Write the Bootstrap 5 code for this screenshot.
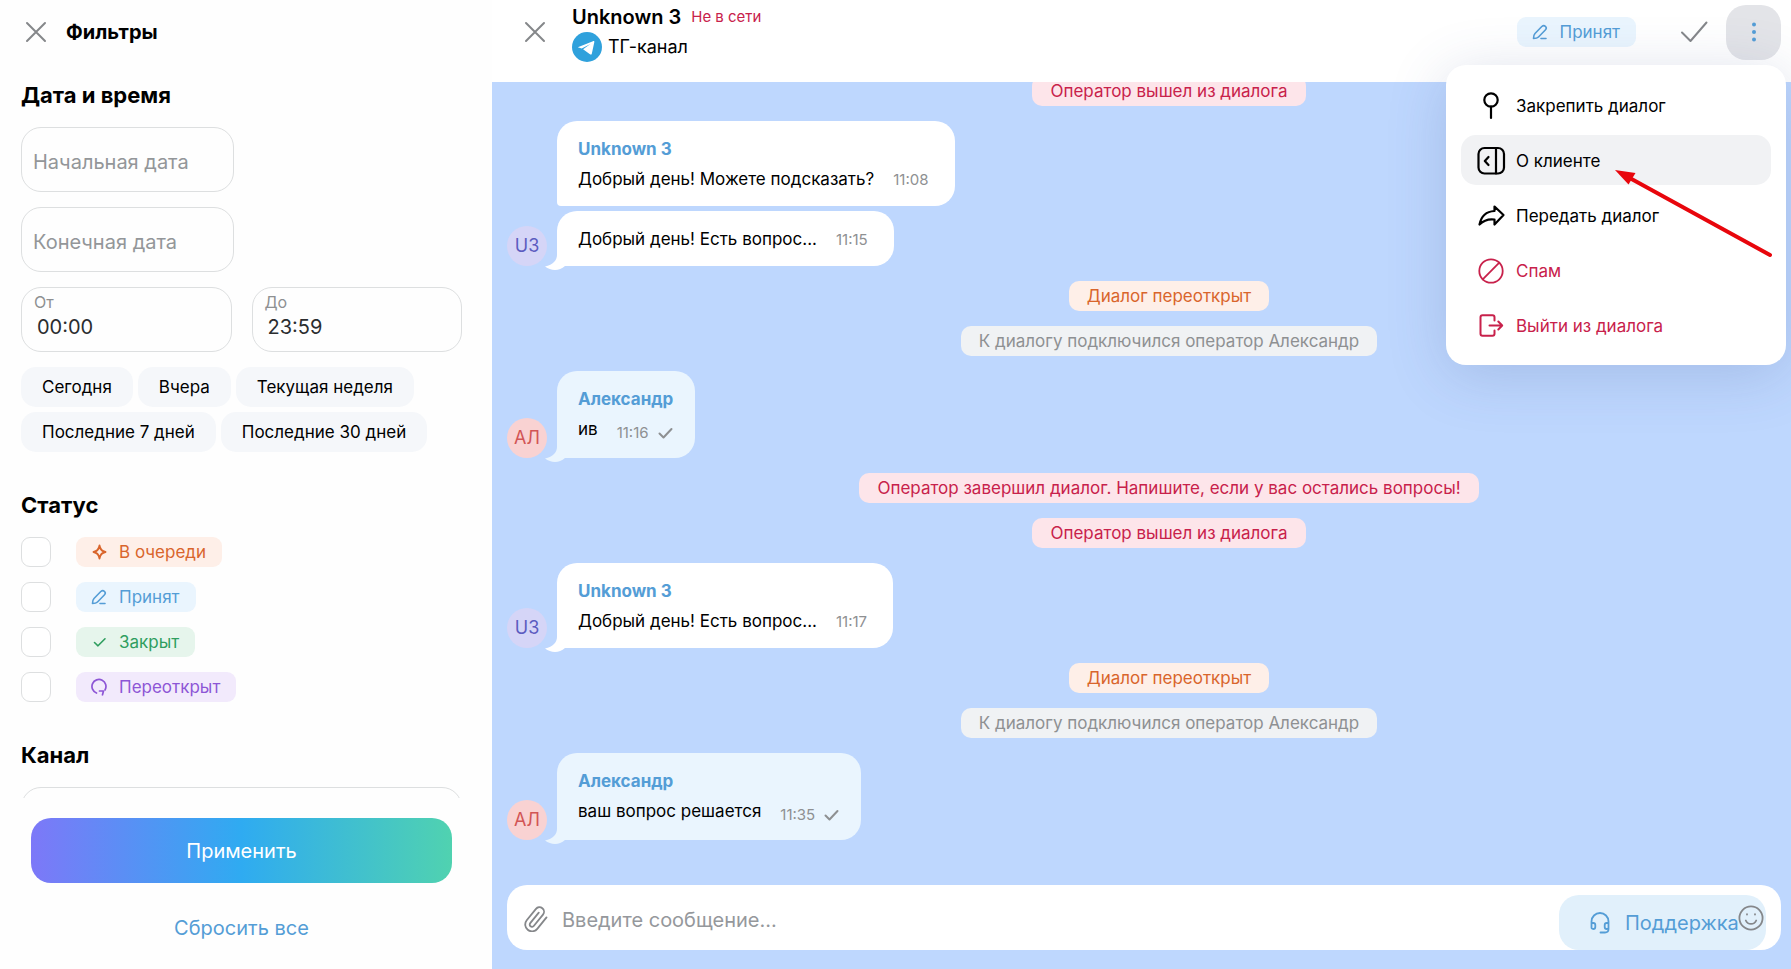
<!DOCTYPE html>
<html lang="ru">
<head>
<meta charset="utf-8">
<meta name="viewport" content="width=device-width, initial-scale=1">
<title>Диалоги</title>
<link href="https://cdn.jsdelivr.net/npm/bootstrap@5.3.0/dist/css/bootstrap.min.css" rel="stylesheet">
<style>
  :root {
    --accent: #549dd6;
    --accent-soft: #eaf5fe;
    --danger: #c8214b;
    --muted: #8e9092;
    --line: #dddfe0;
  }
  body { font-family: Inter, "Liberation Sans", sans-serif; font-size: 17px; line-height: 30px; color: #000; background: #fff; }
  svg { display: block; flex: none; fill: none; stroke: currentColor; stroke-linecap: round; stroke-linejoin: round; }
  button { color: inherit; }

  /* filters */
  .filters { width: 492px; background: #fefefe; }
  .filters-head { height: 64px; padding: 0 24px; gap: 18px; }
  .filters-title { font-size: 20px; font-weight: 700; }
  .filters-body { padding: 16px 30px 0 21px; }
  .section-title { font-size: 22px; font-weight: 700; line-height: 30px; margin: 38px 0 17px; }
  .section-title:first-child { margin-top: 0; }
  .stack { gap: 15px; }
  .field { height: 65px; border: 1px solid var(--line); border-radius: 20px; font-size: 20px; padding: 4px 11px 0; box-shadow: none; background: transparent; }
  .field::placeholder { color: #939699; opacity: 1; }
  .field-date { width: 213px; }
  .field-time { padding: 14px 15px 0; color: #2b2d2f; }
  .field-label { position: absolute; left: 13px; top: 5px; font-size: 16px; line-height: 20px; color: var(--muted); }
  .time-grid { display: grid; grid-template-columns: 1fr 1fr; gap: 20px; }
  .chips { gap: 5px; margin-top: 15px; }
  .chip { height: 40px; padding: 0 21px; border: 0; border-radius: 15px; background: #f5f7fa; }
  .check-row { gap: 25px; }
  .tick { width: 30px; height: 30px; margin: 0; border: 1px solid var(--line); border-radius: 9px !important; }
  .state { height: 30px; padding: 0 16px 0 15px; border-radius: 9px; gap: 12px; }
  .state-queue { color: #d9652c; background: #feefe8; }
  .state-taken { color: var(--accent); background: var(--accent-soft); }
  .state-closed { color: #2f9e5f; background: #e6f5ec; }
  .state-reopen { color: #8d56d6; background: #f2eafc; }
  .filters-foot { padding: 20px 40px 26px 31px; gap: 30px; }
  .apply { height: 65px; border: 0; border-radius: 20px; color: #fff; font-size: 20px; background: linear-gradient(90deg, #7d78f8, #2fabf1 50%, #50d2b0); }
  .reset { font-size: 20px; color: var(--accent); }

  /* chat */
  .chat { background: #bed7fe; }
  .chat-head { height: 82px; background: #fff; padding: 0 10px 0 31px; }
  .chat-close { margin-top: 20px; }
  .plain { border: 0; background: none; padding: 0; color: #85878a; }
  .who { margin-left: 25px; margin-top: 2px; }
  .who-name { font-size: 20px; font-weight: 600; line-height: 30px; }
  .who-status { font-size: 15px; color: var(--danger); }
  .who-channel { font-size: 18px; gap: 6px; }
  .head-actions { height: 64px; }
  .finish { margin-left: 44px; }
  .more { width: 55px; height: 55px; border-radius: 20px; background: #e3e4e8; color: var(--accent); margin-left: 18px; }
  .menu { top: 65px; right: 5px; width: 340px; padding: 15px; gap: 5px; border-radius: 20px; background: #fff; z-index: 5; box-shadow: 0 10px 60px rgba(60, 80, 140, .2); }
  .menu-item { height: 50px; width: 100%; border: 0; background: none; border-radius: 15px; padding: 1px 15px 0; gap: 10px; text-align: left; color: #000; }
  .menu-item.current { background: #f1f2f4; }
  .menu-item.danger { color: var(--danger); }
  .pointer { left: 165px; top: 101px; }

  .feed { padding: 0 10px 45px 15px; gap: 15px; min-height: 0; }
  .event { padding: 0 18px; margin-left: 50px; border-radius: 10px; }
  .event-red { color: var(--danger); background: #fde5ea; }
  .event-orange { color: #d9652c; background: #feefe8; }
  .event-grey { color: var(--muted); background: #f0f2f4; }
  .thread { gap: 5px; }
  .message { gap: 10px; }
  .avatar { width: 40px; height: 40px; border-radius: 50%; line-height: 40px; font-size: 18px; text-align: center; }
  .avatar-client { background: #d5d5f7; color: #5c5cc0; }
  .avatar-staff { background: #f9d2d2; color: #d25555; }
  .bubble { --fill: #fff; background: var(--fill); border-radius: 20px 20px 20px 0; padding: 13px 20px 12px 21px; }
  .bubble.staff { --fill: #eaf5fe; }
  .bubble.joined { border-bottom-left-radius: 4px; margin-left: 50px; }
  .tail { left: -12px; bottom: -5px; fill: var(--fill); stroke: none; }
  .author { font-weight: 700; color: var(--accent); }
  .stamp { font-size: 15px; color: var(--muted); line-height: 28px; margin: 0 6px 0 19px; gap: 9px; }
  .staff .stamp { line-height: 26px; margin-right: 2px; }
  .staff .line { height: 32px; }

  .composer { height: 65px; margin: 0 10px 19px 15px; border-radius: 20px; background: #fff; padding: 0 17px 0 17px; }
  .composer-input { border: 0; outline: 0; font-size: 20px; background: none; padding: 4px 14px 0; }
  .composer-input::placeholder { color: #95989c; opacity: 1; }
  .support { right: 15px; bottom: 0; height: 55px; width: 207px; border: 0; border-radius: 20px; padding: 0 0 0 31px; gap: 15px; font-size: 20px; color: var(--accent); background: #e1f0fb; }
</style>
</head>
<body>
<div class="d-flex vh-100 overflow-hidden">

  <aside class="filters d-flex flex-column flex-shrink-0">
    <header class="filters-head d-flex align-items-center flex-shrink-0">
      <button class="plain" type="button" aria-label="Закрыть фильтры"><svg width="24" height="24" viewBox="0 0 24 24" stroke-width="2"><path d="M3 3l18 18M21 3L3 21"/></svg></button>
      <h1 class="filters-title m-0">Фильтры</h1>
    </header>

    <form class="filters-body flex-grow-1 overflow-hidden" id="filters">
      <h2 class="section-title">Дата и время</h2>
      <div class="stack d-flex flex-column">
        <input class="form-control field field-date" type="text" placeholder="Начальная дата" aria-label="Начальная дата">
        <input class="form-control field field-date" type="text" placeholder="Конечная дата" aria-label="Конечная дата">
        <div class="time-grid">
          <div class="position-relative">
            <input class="form-control field field-time" type="text" id="from" value="00:00">
            <label class="field-label" for="from">От</label>
          </div>
          <div class="position-relative">
            <input class="form-control field field-time" type="text" id="to" value="23:59">
            <label class="field-label" for="to">До</label>
          </div>
        </div>
      </div>
      <div class="chips d-flex flex-wrap">
        <button class="chip" type="button">Сегодня</button>
        <button class="chip" type="button">Вчера</button>
        <button class="chip" type="button">Текущая неделя</button>
        <button class="chip" type="button">Последние 7 дней</button>
        <button class="chip" type="button">Последние 30 дней</button>
      </div>

      <h2 class="section-title">Статус</h2>
      <div class="stack d-flex flex-column">
        <div class="check-row d-flex">
          <input class="form-check-input tick" type="checkbox" id="s1">
          <label class="state state-queue d-flex align-items-center" for="s1"><svg width="16" height="16" viewBox="0 0 16 16" stroke-width="1.8"><path d="M8.500 1.500C9.100 5 11 7.400 14.500 8C11 8.600 9.100 11 8.500 14.500C7.900 11 6 8.600 2.500 8C6 7.400 7.900 5 8.500 1.500Z"/></svg>В очереди</label>
        </div>
        <div class="check-row d-flex">
          <input class="form-check-input tick" type="checkbox" id="s2">
          <label class="state state-taken d-flex align-items-center" for="s2"><svg width="16" height="16" viewBox="0 0 16 16" stroke-width="1.6"><path d="M1.500 14.500C1.500 12 2 10.500 3 9.500L9.800 2.500C12.500.2 15.800 3.500 13.300 6L6.500 13C5.500 14 4 14.500 1.500 14.500ZM9 14.500h5"/></svg>Принят</label>
        </div>
        <div class="check-row d-flex">
          <input class="form-check-input tick" type="checkbox" id="s3">
          <label class="state state-closed d-flex align-items-center" for="s3"><svg width="16" height="16" viewBox="0 0 16 16" stroke-width="1.6"><path d="M3.500 8.500l3.500 3.300L14 4.800"/></svg>Закрыт</label>
        </div>
        <div class="check-row d-flex">
          <input class="form-check-input tick" type="checkbox" id="s4">
          <label class="state state-reopen d-flex align-items-center" for="s4"><svg width="16" height="18" viewBox="0 0 16 18" stroke-width="1.700"><path d="M5.500 15A7 7 0 1 1 14 12M8.500 13H12.500L11.500 16.800"/></svg>Переоткрыт</label>
        </div>
      </div>

      <h2 class="section-title"><label for="channel">Канал</label></h2>
      <input class="form-control field" type="text" id="channel">
    </form>

    <footer class="filters-foot d-flex flex-column flex-shrink-0">
      <button class="apply w-100" type="submit" form="filters">Применить</button>
      <a class="reset text-center text-decoration-none" href="#">Сбросить все</a>
    </footer>
  </aside>

  <main class="chat d-flex flex-column flex-grow-1 position-relative">
    <header class="chat-head d-flex flex-shrink-0">
      <button class="plain chat-close align-self-start" type="button" aria-label="Закрыть диалог"><svg width="24" height="24" viewBox="0 0 24 24" stroke-width="2"><path d="M3 3l18 18M21 3L3 21"/></svg></button>
      <div class="who flex-grow-1">
        <div class="message d-flex align-items-center"><span class="who-name">Unknown 3</span><span class="who-status">Не в сети</span></div>
        <div class="who-channel d-flex align-items-center">
          <svg width="30" height="30" viewBox="0 0 30 30"><circle cx="15" cy="15" r="15" style="fill:#2fa1dc;stroke:none"/><path style="fill:#fff;stroke:none" d="M5.800 15.300L21 9.200c1-.4 1.500.1 1.300 1.100l-2.500 11.500c-.2.900-.8 1-1.500.600l-7.200-5.200 7.300-5.300-8.700 4.700z"/></svg>
          <span>ТГ-канал</span>
        </div>
      </div>
      <div class="head-actions d-flex align-items-center">
        <div class="state state-taken d-flex align-items-center"><svg width="16" height="16" viewBox="0 0 16 16" stroke-width="1.600"><path d="M1.500 14.500C1.500 12 2 10.500 3 9.500L9.800 2.500C12.500.2 15.800 3.500 13.300 6L6.500 13C5.500 14 4 14.500 1.500 14.500ZM9 14.500h5"/></svg>Принят</div>
        <button class="plain finish" type="button" aria-label="Завершить"><svg width="28" height="24" viewBox="0 0 28 24" stroke-width="2"><path d="M2 12.500l8.500 8.500L26.500 2.500"/></svg></button>
        <button class="plain more d-flex align-items-center justify-content-center" type="button" aria-label="Меню" aria-expanded="true"><svg width="6" height="20" viewBox="0 0 6 20" style="fill:currentColor;stroke:none"><circle cx="3" cy="2.500" r="2"/><circle cx="3" cy="10" r="2"/><circle cx="3" cy="17.500" r="2"/></svg></button>
      </div>
    </header>

    <nav class="menu position-absolute d-flex flex-column" aria-label="Действия">
      <button class="menu-item d-flex align-items-center" type="button"><svg width="30" height="30" viewBox="0 0 30 30" stroke-width="2.200"><circle cx="15" cy="9" r="6.700"/><path d="M15 15.700V27"/></svg>Закрепить диалог</button>
      <button class="menu-item current d-flex align-items-center" type="button"><svg width="30" height="30" viewBox="0 0 30 30" stroke-width="2.200"><rect x="2.500" y="2" width="25.500" height="25.500" rx="6"/><path d="M20 2v25.500M12.500 11L8.800 15l3.700 4"/></svg>О клиенте</button>
      <button class="menu-item d-flex align-items-center" type="button"><svg width="30" height="30" viewBox="0 0 30 30" stroke-width="2.200"><path d="M18.500 5.500L27.500 14L18.500 23.500V18.500C11.500 17.500 7.500 19.500 3.500 23.500C5 16 9.500 10.500 18.500 10Z"/></svg>Передать диалог</button>
      <button class="menu-item danger d-flex align-items-center" type="button"><svg width="30" height="30" viewBox="0 0 30 30" stroke-width="1.800"><circle cx="15" cy="15" r="11.700"/><path d="M6.700 23.300L23.300 6.700"/></svg>Спам</button>
      <button class="menu-item danger d-flex align-items-center" type="button"><svg width="30" height="30" viewBox="0 0 30 30" stroke-width="2"><path d="M18.500 9.500V6.300Q18.500 4.300 16.500 4.300H6.500Q4.500 4.300 4.500 6.300V22.700Q4.500 24.700 6.500 24.700H16.500Q18.500 24.700 18.500 22.700V19.500M13.500 14.500H26M22.300 10.500l3.900 4-3.900 4"/></svg>Выйти из диалога</button>
      <svg class="pointer position-absolute" width="166" height="96" viewBox="0 0 166 96" aria-hidden="true"><path d="M16 10.500L159 89" stroke="#e8060c" style="stroke:#e8060c;stroke-width:4"/><path d="M4 4L24.500 7L17.500 18.500Z" style="fill:#e8060c;stroke:none"/></svg>
    </nav>

    <section class="feed d-flex flex-column justify-content-end flex-grow-1 overflow-hidden">
      <div class="event event-red align-self-center">Оператор вышел из диалога</div>

      <div class="thread d-flex flex-column align-items-start">
        <div class="bubble joined">
          <div class="author">Unknown 3</div>
          <div class="line d-flex align-items-end justify-content-between"><span>Добрый день! Можете подсказать?</span><time class="stamp">11:08</time></div>
        </div>
        <div class="message d-flex align-items-end">
          <div class="avatar avatar-client">U3</div>
          <div class="bubble position-relative">
            <svg class="tail position-absolute" width="24" height="20" viewBox="0 0 24 20"><path d="M12 0V4C12 9 8 14 0 15.500C6 20 14 20.500 20 15H24V0Z"/></svg>
            <div class="line d-flex align-items-end justify-content-between"><span>Добрый день! Есть вопрос...</span><time class="stamp">11:15</time></div>
          </div>
        </div>
      </div>

      <div class="event event-orange align-self-center">Диалог переоткрыт</div>
      <div class="event event-grey align-self-center">К диалогу подключился оператор Александр</div>

      <div class="message d-flex align-items-end">
        <div class="avatar avatar-staff">АЛ</div>
        <div class="bubble staff position-relative">
          <svg class="tail position-absolute" width="24" height="20" viewBox="0 0 24 20"><path d="M12 0V4C12 9 8 14 0 15.500C6 20 14 20.500 20 15H24V0Z"/></svg>
          <div class="author">Александр</div>
          <div class="line d-flex justify-content-between"><span>ив</span><time class="stamp d-flex align-items-center align-self-end">11:16<svg width="15" height="12" viewBox="0 0 15 12" stroke-width="2"><path d="M1.500 6.500l4 4L13.500 2"/></svg></time></div>
        </div>
      </div>

      <div class="event event-red align-self-center">Оператор завершил диалог. Напишите, если у вас остались вопросы!</div>
      <div class="event event-red align-self-center">Оператор вышел из диалога</div>

      <div class="message d-flex align-items-end">
        <div class="avatar avatar-client">U3</div>
        <div class="bubble position-relative">
          <svg class="tail position-absolute" width="24" height="20" viewBox="0 0 24 20"><path d="M12 0V4C12 9 8 14 0 15.500C6 20 14 20.500 20 15H24V0Z"/></svg>
          <div class="author">Unknown 3</div>
          <div class="line d-flex align-items-end justify-content-between"><span>Добрый день! Есть вопрос...</span><time class="stamp">11:17</time></div>
        </div>
      </div>

      <div class="event event-orange align-self-center">Диалог переоткрыт</div>
      <div class="event event-grey align-self-center">К диалогу подключился оператор Александр</div>

      <div class="message d-flex align-items-end">
        <div class="avatar avatar-staff">АЛ</div>
        <div class="bubble staff position-relative">
          <svg class="tail position-absolute" width="24" height="20" viewBox="0 0 24 20"><path d="M12 0V4C12 9 8 14 0 15.500C6 20 14 20.500 20 15H24V0Z"/></svg>
          <div class="author">Александр</div>
          <div class="line d-flex justify-content-between"><span>ваш вопрос решается</span><time class="stamp d-flex align-items-center align-self-end">11:35<svg width="15" height="12" viewBox="0 0 15 12" stroke-width="2"><path d="M1.500 6.500l4 4L13.500 2"/></svg></time></div>
        </div>
      </div>
    </section>

    <form class="composer d-flex align-items-center flex-shrink-0 position-relative">
      <button class="plain" type="button" aria-label="Прикрепить файл"><svg width="24" height="28" viewBox="0 0 24 28" stroke-width="1.600"><g transform="translate(-1.700 2.200) rotate(-6 12 12) scale(1.130)"><path d="M21.440 11.050l-9.190 9.190a6 6 0 0 1-8.490-8.490l9.190-9.190a4 4 0 0 1 5.660 5.660l-9.200 9.190a2 2 0 0 1-2.830-2.830l8.490-8.480"/></g></svg></button>
      <input class="composer-input flex-grow-1" type="text" placeholder="Введите сообщение..." aria-label="Сообщение">
      <button class="support position-absolute d-flex align-items-center" type="button"><svg width="20" height="22" viewBox="0 0 20 22" stroke-width="1.800"><path d="M1.500 12V9.500a8.500 8.500 0 0 1 17 0V17q0 3.500-3.500 3.500H10.500M1.500 11h1.800q2 0 2 2v2q0 2-2 2t-1.800-2zM18.500 11h-1.800q-2 0-2 2v2q0 2 2 2t1.800-2z"/></svg>Поддержка</button>
      <button class="plain position-relative" type="button" aria-label="Эмодзи"><svg width="26" height="26" viewBox="0 0 26 26" stroke-width="1.800"><circle cx="13" cy="13" r="11.600"/><path d="M7.800 15.500c2 4.500 8.400 4.500 10.400 0M9 9.200v.4M17 9.200v.4"/></svg></button>
    </form>
  </main>
</div>
<script src="https://cdn.jsdelivr.net/npm/bootstrap@5.3.0/dist/js/bootstrap.bundle.min.js"></script>
</body>
</html>
